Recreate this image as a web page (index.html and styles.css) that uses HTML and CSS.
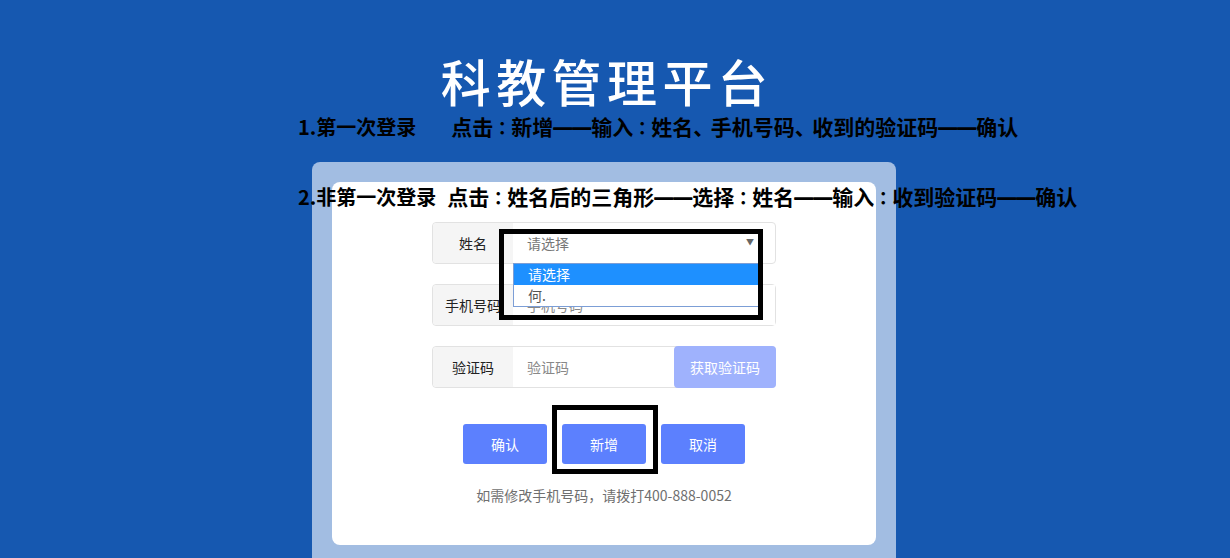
FILE: index.html
```html
<!DOCTYPE html>
<html lang="zh-CN">
<head>
    <meta charset="UTF-8">
    <meta name="viewport" content="width=device-width, initial-scale=1.0">
    <title>科教管理平台</title>
    <link rel="stylesheet" href="styles.css">
</head>
<body>
    <div class="page">
        <h1 class="title">科教管理平台</h1>

        <div class="notes">
            <p><span class="lead">1.第一次登录</span><span class="gap-lg"></span>点击<span class="colon">：</span>新增<span class="dash">——</span>输入<span class="colon">：</span>姓名<span class="pause">、</span>手机号码<span class="pause">、</span>收到的验证码<span class="dash">——</span>确认</p>
            <p><span class="lead">2.非第一次登录</span><span class="gap-sm"></span>点击<span class="colon">：</span>姓名后的三角形<span class="dash">——</span>选择<span class="colon">：</span>姓名<span class="dash">——</span>输入<span class="colon">：</span>收到验证码<span class="dash">——</span>确认</p>
        </div>

        <div class="panel">
            <div class="card">
                <form class="login-form">
                    <div class="field field-select">
                        <label class="field-label">姓名</label>
                        <div class="select">
                            <span class="select-value">请选择</span>
                            <span class="select-arrow">▼</span>
                        </div>
                        <ul class="select-list">
                            <li class="selected">请选择</li>
                            <li>何.</li>
                        </ul>
                        <div class="mark mark-select"></div>
                    </div>

                    <div class="field">
                        <label class="field-label">手机号码</label>
                        <input class="field-input" type="text" placeholder="手机号码">
                    </div>

                    <div class="field">
                        <label class="field-label">验证码</label>
                        <input class="field-input" type="text" placeholder="验证码">
                        <button type="button" class="code-btn">获取验证码</button>
                    </div>

                    <div class="actions">
                        <button type="button" class="btn">确认</button>
                        <div class="btn-wrap">
                            <button type="button" class="btn">新增</button>
                            <div class="mark mark-add"></div>
                        </div>
                        <button type="button" class="btn">取消</button>
                    </div>
                </form>

                <p class="tip">如需修改手机号码，请拨打400-888-0052</p>
            </div>
        </div>
    </div>
</body>
</html>
```

FILE: styles.css
```css
body {
    margin: 0;
    padding: 0;
    background: #1658b0;
    font-family: "Noto Sans CJK SC", "Noto Sans", sans-serif;
    overflow: hidden;
}

.page {
    width: 1208px;
    display: flex;
    flex-direction: column;
    align-items: center;
}

.title {
    margin: 56px 0 0;
    padding-left: 6px;
    font-size: 50px;
    line-height: 48px;
    font-weight: 500;
    letter-spacing: 5.4px;
    color: #fff;
}

.notes {
    align-self: stretch;
    position: relative;
    z-index: 2;
    margin-top: 12px;
    padding-left: 298px;
}

.notes p {
    margin: 0;
    height: 20px;
    font-size: 21px;
    line-height: 20px;
    font-weight: 700;
    color: #000;
    white-space: nowrap;
}

.notes p + p {
    margin-top: 50px;
}

.lead {
    font-size: 20px;
}

.colon {
    display: inline-block;
    width: 18px;
    text-align: center;
    font-family: "Noto Sans CJK TC", sans-serif;
    font-size: 18px;
}

.pause {
    display: inline-block;
    width: 17.5px;
}

/* arial em dash is exactly 1em, so two of them join into one bar */
.dash {
    position: relative;
    top: -2px;
    font-family: "Liberation Sans", sans-serif;
    font-size: 19px;
    text-shadow: 0 0.8px 0 #000;
}

.gap-lg {
    display: inline-block;
    width: 35px;
}

.gap-sm {
    display: inline-block;
    width: 11px;
}

.panel {
    margin-top: -44px;
    width: 584px;
    padding: 20px 20px 13px;
    box-sizing: border-box;
    background: #a2bde2;
    border-radius: 8px 8px 0 0;
}

.card {
    background: #fff;
    border-radius: 8px;
    padding: 40px 0 40px;
    display: flex;
    flex-direction: column;
    align-items: center;
}

.login-form {
    width: 344px;
    display: flex;
    flex-direction: column;
    gap: 20px;
}

.field {
    position: relative;
    display: flex;
    height: 42px;
    box-sizing: border-box;
    border: 1px solid #e2e2e2;
    border-radius: 4px;
    font-size: 14px;
}

.field-label {
    width: 80px;
    flex-shrink: 0;
    background: #f5f5f5;
    color: #222;
    display: flex;
    align-items: center;
    justify-content: center;
    white-space: nowrap;
    border-radius: 4px 0 0 4px;
}

.field-input {
    flex: 1;
    min-width: 0;
    border: none;
    outline: none;
    padding: 0 14px;
    font-family: inherit;
    font-size: 14px;
    color: #333;
    background: #fff;
}

.field-input::placeholder {
    color: #888;
}

.select {
    flex: 1;
    display: flex;
    align-items: center;
    justify-content: space-between;
    padding: 0 21px 0 14px;
    color: #777;
}

.select-arrow {
    font-size: 8px;
    color: #666;
    margin-top: -4px;
}

.select-list {
    position: absolute;
    left: 80px;
    top: 40px;
    width: 250px;
    margin: 0;
    padding: 0;
    list-style: none;
    background: #fff;
    border: 1px solid #7c9ed6;
    box-sizing: border-box;
    z-index: 3;
}

.select-list li {
    height: 21px;
    line-height: 21px;
    padding-left: 14px;
    color: #555;
}

.select-list li.selected {
    background: #1e90ff;
    color: #fff;
}

.code-btn {
    width: 102px;
    margin: -1px -1px -1px 0;
    border: none;
    border-radius: 4px;
    background: #9fb2fd;
    color: #fff;
    font-family: inherit;
    font-size: 14px;
    cursor: pointer;
}

.actions {
    margin-top: 16px;
    display: flex;
    justify-content: center;
    gap: 15px;
}

.btn {
    width: 84px;
    height: 40px;
    border: none;
    border-radius: 3px;
    background: #5c80fe;
    color: #fff;
    font-family: inherit;
    font-size: 14px;
    cursor: pointer;
}

.btn-wrap {
    position: relative;
    display: flex;
}

.mark {
    position: absolute;
    border: 5px solid #000;
    box-sizing: border-box;
    z-index: 4;
}

.mark-select {
    left: 66px;
    top: 6px;
    width: 264px;
    height: 91px;
}

.mark-add {
    left: -10px;
    top: -19px;
    width: 106px;
    height: 69px;
}

.tip {
    margin: 21px 0 0;
    font-size: 14px;
    line-height: 20px;
    color: #6f6f6f;
}
```
